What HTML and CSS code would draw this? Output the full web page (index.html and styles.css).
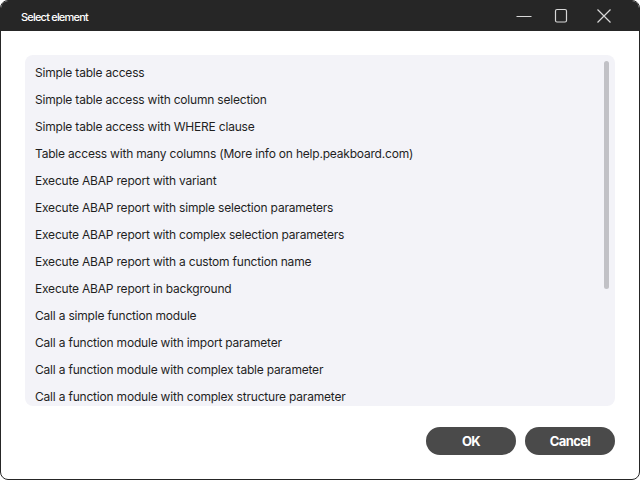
FILE: index.html
```html
<!DOCTYPE html>
<html lang="en">
  <head>
    <meta charset="UTF-8" />
    <title>Select element</title>
    <link rel="stylesheet" href="styles.css">
  </head>
  <body>
    <div class="window">
      <div class="titlebar">
        <span class="title">Select element</span>
        <div class="caption-buttons">
          <button class="caption-btn">
            <svg width="24" height="16" viewBox="0 0 24 16"><path d="M8.5 8.5h15" stroke="#d8d8d8" stroke-width="1.2" fill="none"/></svg>
          </button>
          <button class="caption-btn">
            <svg width="16" height="16" viewBox="0 0 16 16"><rect x="1.5" y="1.5" width="11" height="12.5" rx="1.5" stroke="#d8d8d8" stroke-width="1.2" fill="none"/></svg>
          </button>
          <button class="caption-btn">
            <svg width="16" height="16" viewBox="0 0 16 16"><path d="M1.5 1.5l13 13M14.5 1.5l-13 13" stroke="#d8d8d8" stroke-width="1.2" fill="none"/></svg>
          </button>
        </div>
      </div>
      <div class="content">
        <div class="list">
          <div class="item">Simple table access</div>
          <div class="item">Simple table access with column selection</div>
          <div class="item">Simple table access with WHERE clause</div>
          <div class="item">Table access with many columns (More info on help.peakboard.com)</div>
          <div class="item">Execute ABAP report with variant</div>
          <div class="item">Execute ABAP report with simple selection parameters</div>
          <div class="item">Execute ABAP report with complex selection parameters</div>
          <div class="item">Execute ABAP report with a custom function name</div>
          <div class="item">Execute ABAP report in background</div>
          <div class="item">Call a simple function module</div>
          <div class="item">Call a function module with import parameter</div>
          <div class="item">Call a function module with complex table parameter</div>
          <div class="item">Call a function module with complex structure parameter</div>
          <div class="scroll-thumb"></div>
        </div>
        <div class="actions">
          <button class="btn">OK</button>
          <button class="btn">Cancel</button>
        </div>
      </div>
    </div>
  </body>
</html>
```

FILE: styles.css
```css
html,
body {
  margin: 0;
  padding: 0;
  background: #ffffff;
}

body {
  font-family: Inter, "Noto Sans", sans-serif;
}

.window {
  width: 640px;
  height: 480px;
  box-sizing: border-box;
  border: 1px solid #262626;
  border-radius: 8px;
  overflow: hidden;
  display: flex;
  flex-direction: column;
  background: #ffffff;
}

.titlebar {
  height: 30px;
  background: #262626;
  display: flex;
  align-items: center;
  justify-content: space-between;
  flex-shrink: 0;
}

.title {
  color: #ffffff;
  font-size: 11px;
  font-weight: 500;
  letter-spacing: -0.8px;
  padding-left: 20px;
  padding-top: 1px;
}

.caption-buttons {
  display: flex;
  padding-right: 21px;
  gap: 14px;
}

.caption-btn {
  width: 28px;
  height: 30px;
  border: none;
  background: transparent;
  padding: 0;
  display: flex;
  align-items: center;
  justify-content: center;
}

.content {
  flex: 1;
  padding: 24px 24px 0 24px;
  display: flex;
  flex-direction: column;
}

.list {
  position: relative;
  height: 351px;
  background: #f3f3f8;
  border-radius: 8px;
  padding-top: 4px;
  box-sizing: border-box;
  overflow: hidden;
}

.item {
  height: 27px;
  line-height: 27px;
  padding-left: 10px;
  font-size: 12px;
  color: #1f1f1f;
  letter-spacing: -0.2px;
  white-space: nowrap;
}

.scroll-thumb {
  position: absolute;
  top: 6px;
  right: 6px;
  width: 5px;
  height: 228px;
  border-radius: 3px;
  background: #c1c1c6;
}

.actions {
  display: flex;
  justify-content: flex-end;
  gap: 9px;
  margin-top: 21px;
}

.btn {
  width: 90px;
  height: 28px;
  border: none;
  border-radius: 14px;
  background: #4a4a4a;
  color: #ffffff;
  font-family: Inter, "Noto Sans", sans-serif;
  font-size: 13px;
  font-weight: 700;
  letter-spacing: -0.6px;
  cursor: pointer;
}
```
